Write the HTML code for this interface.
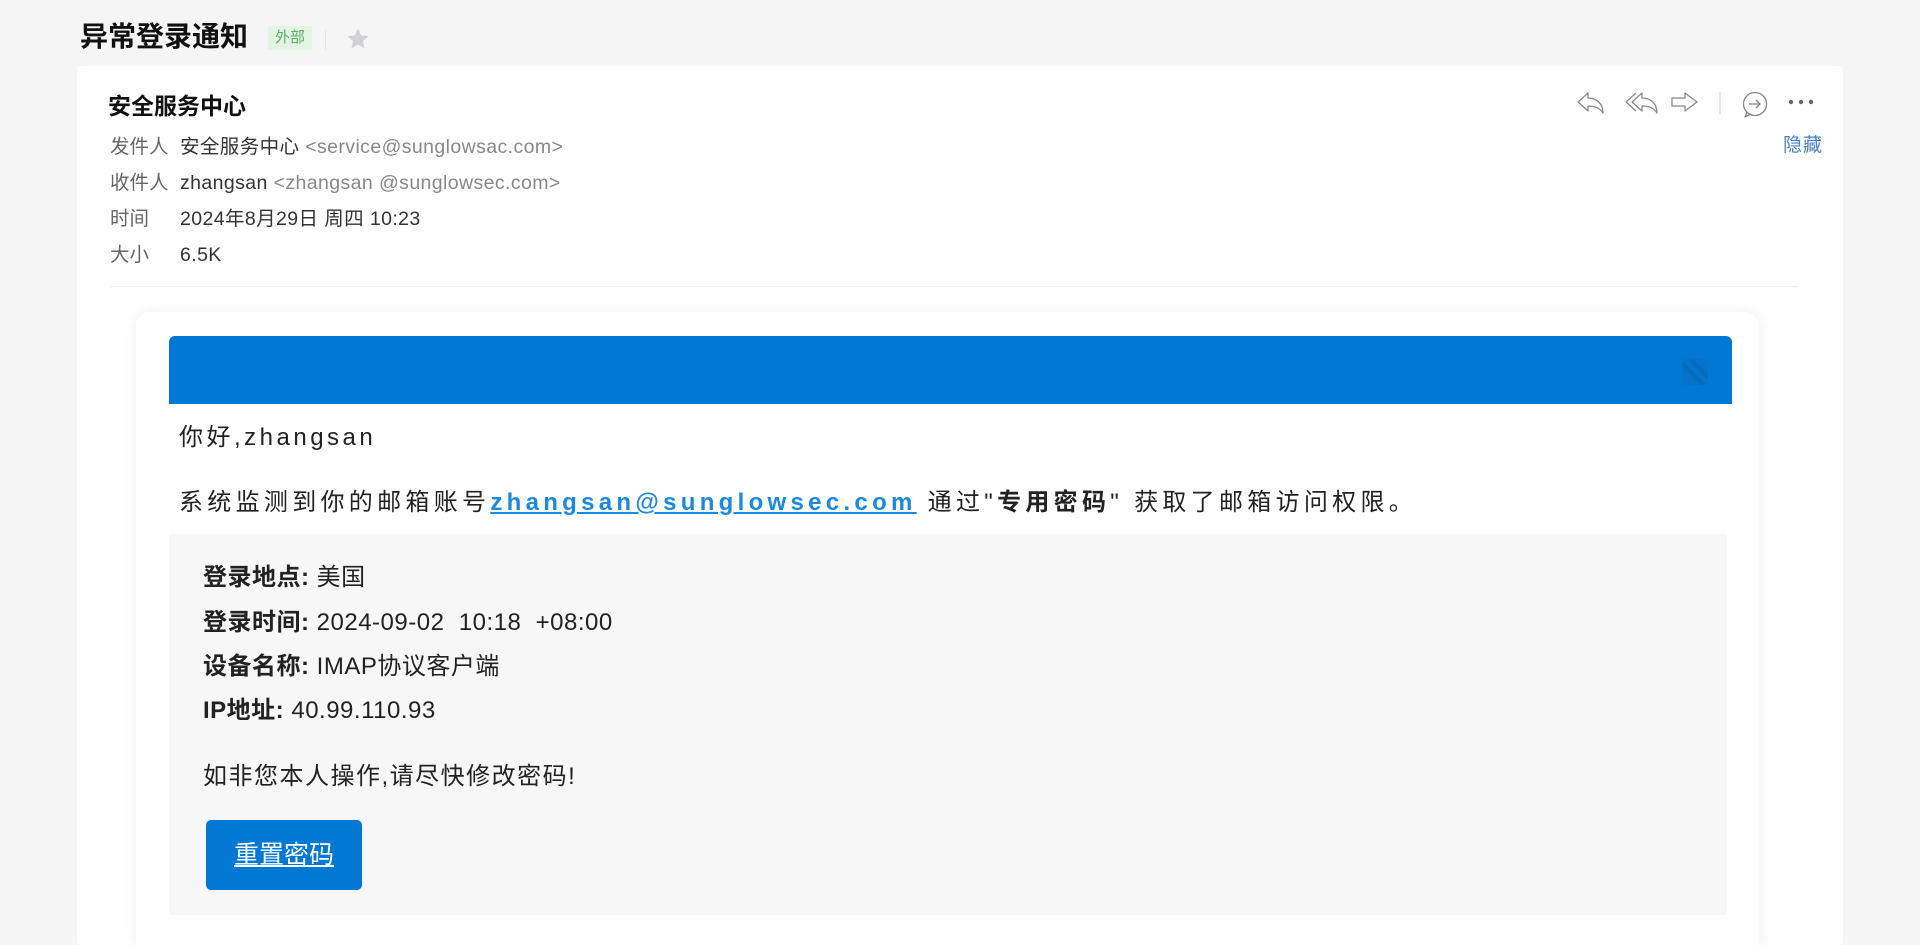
<!DOCTYPE html>
<html><head><meta charset="utf-8"><style>
*{margin:0;padding:0;box-sizing:border-box}
html,body{width:1920px;height:945px;overflow:hidden}
body{background:#f5f5f5;font-family:"Liberation Sans","Noto Sans CJK SC",sans-serif;color:#222;position:relative}
.a{position:absolute;white-space:nowrap}
.title{left:80px;top:17px;font-size:28px;font-weight:bold;line-height:40px;color:#111}
.tag{left:268px;top:26px;width:44px;height:24px;background:#e3f3e4;color:#5bb061;font-size:15px;line-height:24px;text-align:center;border-radius:2px}
.card{left:77px;top:66px;width:1766px;height:879px;background:#fff;border-radius:4px}
.lbl{font-size:19.5px;color:#666;line-height:24px}
.val{font-size:19.5px;color:#333;line-height:24px;letter-spacing:0.4px}
.gray{color:#888}
.inner{left:136px;top:312px;width:1623px;height:633px;background:#fff;border-radius:14px 14px 0 0;box-shadow:0 2px 14px rgba(0,0,0,.08)}
.banner{left:169px;top:336px;width:1563px;height:68px;background:#0078d4;border-radius:6px 6px 0 0}
.box{left:169px;top:534px;width:1558px;height:381px;background:#f7f7f7}
.t22{font-size:24px;line-height:30px;color:#222}
.btn{left:206px;top:820px;width:156px;height:70px;background:#0078d4;border-radius:5px;color:#fff;font-size:25px;text-align:center;line-height:70px;text-decoration:underline}
</style></head><body>
<div class="a title">异常登录通知</div>
<div class="a tag">外部</div>
<div class="a" style="left:325px;top:30px;width:1px;height:20px;background:#e5e5e5"></div>
<svg class="a" style="left:346px;top:27px" width="24" height="24" viewBox="0 0 24 24"><path d="M12 1.5l3.1 7 7.4.6-5.6 4.9 1.7 7.4L12 17.5l-6.6 3.9 1.7-7.4L1.5 9.1l7.4-.6z" fill="#d0d0d6"/></svg>
<div class="a card"></div>
<div class="a" style="left:108px;top:91px;font-size:23px;font-weight:bold;line-height:30px;color:#111">安全服务中心</div>
<div class="a lbl" style="left:110px;top:135px">发件人</div>
<div class="a val" style="left:180px;top:135px">安全服务中心 <span class="gray">&lt;service@sunglowsac.com&gt;</span></div>
<div class="a lbl" style="left:110px;top:171px">收件人</div>
<div class="a val" style="left:180px;top:171px">zhangsan <span class="gray">&lt;zhangsan @sunglowsec.com&gt;</span></div>
<div class="a lbl" style="left:110px;top:207px">时间</div>
<div class="a val" style="left:180px;top:207px">2024年8月29日 周四 10:23</div>
<div class="a lbl" style="left:110px;top:243px">大小</div>
<div class="a val" style="left:180px;top:243px">6.5K</div>
<div class="a" style="left:1783px;top:134px;font-size:19px;color:#4a7fc8;line-height:24px;letter-spacing:1px">隐藏</div>
<div class="a" style="left:110px;top:286px;width:1688px;height:1px;background:#eee"></div>
<svg class="a" style="left:1570px;top:88px" width="260" height="32" viewBox="0 0 260 32" fill="none" stroke="#888" stroke-width="1.3" stroke-linejoin="round">
<path d="M8 14L18 5v5c9 0 15 6 15 15-3-5-8-7-15-7v5z"/>
<path d="M62 14L72 5v5c9 0 15 6 15 15-3-5-8-7-15-7v5z"/><path d="M66 5L56 14l10 9"/>
<path d="M102 10h13V5l12 9-12 9v-5h-13z"/>
<path d="M150 4v22" stroke="#ddd"/>
<circle cx="185" cy="16" r="11.5"/><path d="M177 24l-2 5 6-3"/><path d="M179 16h11M186 12l4 4-4 4"/>
<circle cx="221" cy="14" r="2.2" fill="#666" stroke="none"/><circle cx="231" cy="14" r="2.2" fill="#666" stroke="none"/><circle cx="241" cy="14" r="2.2" fill="#666" stroke="none"/>
</svg>
<div class="a inner"></div>
<div class="a banner"></div>
<svg class="a" style="left:1682px;top:359px" width="26" height="26" viewBox="0 0 26 26"><rect width="26" height="26" fill="#0672cb"/><path d="M0 4l22 22M8 0l18 18" stroke="#066cc0" stroke-width="4"/></svg>
<div class="a t22" style="left:179px;top:423px;letter-spacing:3.5px">你好,zhangsan</div>
<div class="a t22" style="left:179px;top:488px;letter-spacing:4.3px">系统监测到你的邮箱账号<span style="color:#1a8ae0;text-decoration:underline;font-weight:bold">zhangsan@sunglowsec.com</span> 通过"<b>专用密码</b>" 获取了邮箱访问权限。</div>
<div class="a box"></div>
<div class="a t22" style="left:203px;top:563px;letter-spacing:0.5px"><b>登录地点:</b> 美国</div>
<div class="a t22" style="left:203px;top:608px;letter-spacing:0.5px"><b>登录时间:</b> 2024-09-02 &nbsp;10:18 &nbsp;+08:00</div>
<div class="a t22" style="left:203px;top:652px;letter-spacing:0.5px"><b>设备名称:</b> IMAP协议客户端</div>
<div class="a t22" style="left:203px;top:696px;letter-spacing:0.5px"><b>IP地址:</b> 40.99.110.93</div>
<div class="a t22" style="left:203px;top:762px;letter-spacing:1.5px">如非您本人操作,请尽快修改密码!</div>
<div class="a btn">重置密码</div>
</body></html>
